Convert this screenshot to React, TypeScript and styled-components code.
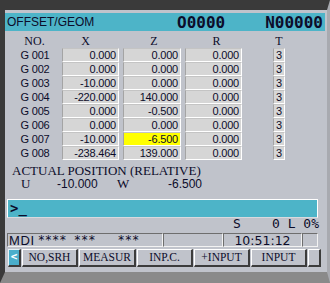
import { Fragment } from "react";
import styled, { createGlobalStyle } from "styled-components";

const GlobalStyle = createGlobalStyle`
  html, body {
    margin: 0;
    padding: 0;
    background: #3a3a3a;
  }
  body {
    width: 330px;
    height: 283px;
    overflow: hidden;
  }
`;

const INK = "#0c0c2a";
const SANS = `"Liberation Sans", Arial, sans-serif`;
const SERIF = `"Liberation Serif", "Times New Roman", serif`;
const MONO = `"DejaVu Sans Mono", monospace`;

const Bezel = styled.div`
  box-sizing: border-box;
  width: 330px;
  height: 283px;
  border-style: solid;
  border-width: 10px 3px 11px 5px;
  border-color: #3a3a3a #a8aab0 #8a8a8a #3a3a3a;
`;

const Screen = styled.div`
  box-sizing: border-box;
  height: 100%;
  padding-top: 3px;
  background: #c0c3cb;
  display: flex;
  flex-direction: column;
  color: ${INK};
`;

const TitleBar = styled.div`
  height: 18px;
  margin-right: 2px;
  padding: 0 2px;
  background: #4db4c8;
  display: flex;
  align-items: center;
`;

const Title = styled.span`
  flex: 1;
  font: 12px ${SANS};
`;

const ProgNo = styled.span<{ $gap?: number }>`
  font: bold 16px ${MONO};
  margin-right: ${(p) => p.$gap ?? 0}px;
`;

const Table = styled.div`
  display: grid;
  grid-template-columns: 51px 57px 58px 57px 1fr;
  grid-template-rows: 17px;
  grid-auto-rows: 14px;
  column-gap: 4px;
  padding-left: 2px;
`;

const HeadCell = styled.div<{ $dx?: number }>`
  font: 12px ${SERIF};
  line-height: 20px;
  text-align: center;
  padding: 0 ${(p) => ((p.$dx ?? 0) < 0 ? -2 * (p.$dx ?? 0) : 0)}px 0
    ${(p) => ((p.$dx ?? 0) > 0 ? 2 * (p.$dx ?? 0) : 0)}px;
`;

const TCol = styled.div`
  width: 12px;
  margin-left: 27px;
`;

const Label = styled.div`
  font: 11px ${SANS};
  line-height: 14px;
  text-align: center;
  padding-left: 5px;
  letter-spacing: -0.2px;
`;

const Field = styled.div<{ $hl?: boolean; $left?: boolean }>`
  box-sizing: border-box;
  height: 14px;
  border-style: solid;
  border-width: 1px;
  border-color: #c4c4c4 #ffffff #ffffff #a4a4a4;
  background: ${(p) => (p.$hl ? "#ffff00" : "#d6d6d6")};
  font: 11px ${SANS};
  line-height: 12px;
  text-align: ${(p) => (p.$left ? "left" : "right")};
  padding: 0 2px 0 2px;
  letter-spacing: -0.2px;
`;

const Actual = styled.div`
  margin-top: 4px;
  padding-left: 7px;
  font: 13px ${SERIF};
  line-height: 13px;
`;

const PosLine = styled.div`
  display: grid;
  grid-template-columns: 36px 60px 51px 1fr;
  padding-left: 9px;
`;

const PosValue = styled.span`
  font: 12px ${SANS};
`;

const CmdBar = styled.div`
  box-sizing: border-box;
  height: 19px;
  margin: 8px 9px 0 2px;
  border-style: solid;
  border-width: 1px;
  border-color: #ffffff #ffffff #d8dade #ffffff;
  background: #4db4c8;
  padding-left: 2px;
  font: bold 14px ${MONO};
  line-height: 17px;
  white-space: pre;
`;

const Status = styled.div`
  height: 11px;
  padding-right: 8px;
  text-align: right;
  font: 13px ${MONO};
  line-height: 11px;
  white-space: pre;
`;

const InfoRow = styled.div`
  display: grid;
  grid-template-columns: 156px 60px 79px 16px;
  height: 14px;
  margin: 4px 0 0 2px;
`;

const InfoBox = styled.div`
  box-sizing: border-box;
  border-style: solid;
  border-width: 1px;
  border-color: #6e6e6e #f2f2f2 #f2f2f2 #6e6e6e;
  display: flex;
  align-items: center;
  justify-content: center;
  overflow: hidden;
`;

const ModeBox = styled(InfoBox)`
  justify-content: flex-start;
  padding-left: 1px;
`;

const Mode = styled.span`
  font: 13px ${SANS};
  letter-spacing: 0.6px;
`;

const Stars = styled.span<{ $gap?: number }>`
  font: 12px ${MONO};
  line-height: 12px;
  align-self: flex-start;
  margin-left: ${(p) => p.$gap ?? 0}px;
  white-space: pre;
`;

const Clock = styled.span`
  font: 12.5px "DejaVu Sans", sans-serif;
`;

const SoftKeys = styled.div`
  display: flex;
  gap: 1px;
  height: 18px;
  margin: 2px 0 0 3px;
`;

const Key = styled.div<{ $w: number }>`
  box-sizing: border-box;
  width: ${(p) => p.$w}px;
  border-style: solid;
  border-width: 1px 2px 2px 1px;
  border-color: #ffffff #3c3c3c #3c3c3c #ffffff;
  background: #c0c3cb;
  font: 11.5px ${SERIF};
  line-height: 15px;
  text-align: center;
  white-space: nowrap;
`;

const BackKey = styled(Key)`
  background: #4aaecb;
  color: #ffffff;
  font: bold 11px ${MONO};
  border-color: #e8f4f8 #3c3c3c #3c3c3c #e8f4f8;
`;

type Row = { no: string; x: string; z: string; r: string; t: string; hl?: boolean };

const rows: Row[] = [
  { no: "G 001", x: "0.000", z: "0.000", r: "0.000", t: "3" },
  { no: "G 002", x: "0.000", z: "0.000", r: "0.000", t: "3" },
  { no: "G 003", x: "-10.000", z: "0.000", r: "0.000", t: "3" },
  { no: "G 004", x: "-220.000", z: "140.000", r: "0.000", t: "3" },
  { no: "G 005", x: "0.000", z: "-0.500", r: "0.000", t: "3" },
  { no: "G 006", x: "0.000", z: "0.000", r: "0.000", t: "3" },
  { no: "G 007", x: "-10.000", z: "-6.500", r: "0.000", t: "3", hl: true },
  { no: "G 008", x: "-238.464", z: "139.000", r: "0.000", t: "3" },
];

const keys = ["NO,SRH", "MEASUR", "INP.C.", "+INPUT", "INPUT"];
const keyWidths = [56, 57, 56, 56, 56];

export default function App() {
  return (
    <>
      <GlobalStyle />
      <Bezel>
        <Screen>
          <TitleBar>
            <Title>OFFSET/GEOM</Title>
            <ProgNo $gap={40}>O0000</ProgNo>
            <ProgNo>N00000</ProgNo>
          </TitleBar>

          <Table>
            <HeadCell $dx={2}>NO.</HeadCell>
            <HeadCell $dx={-5}>X</HeadCell>
            <HeadCell $dx={2}>Z</HeadCell>
            <HeadCell $dx={3}>R</HeadCell>
            <TCol>
              <HeadCell>T</HeadCell>
            </TCol>
            {rows.map((r) => (
              <Fragment key={r.no}>
                <Label>{r.no}</Label>
                <Field>{r.x}</Field>
                <Field $hl={r.hl}>{r.z}</Field>
                <Field>{r.r}</Field>
                <TCol>
                  <Field $left>{r.t}</Field>
                </TCol>
              </Fragment>
            ))}
          </Table>

          <Actual>
            <div>ACTUAL POSITION (RELATIVE)</div>
            <PosLine>
              <span>U</span>
              <PosValue>-10.000</PosValue>
              <span>W</span>
              <PosValue>-6.500</PosValue>
            </PosLine>
          </Actual>

          <CmdBar>{">_"}</CmdBar>
          <Status>{"S    0 L 0%"}</Status>

          <InfoRow>
            <ModeBox>
              <Mode>MDI</Mode>
              <Stars $gap={3}>{"**** ***"}</Stars>
              <Stars $gap={22}>{"***"}</Stars>
            </ModeBox>
            <InfoBox />
            <InfoBox>
              <Clock>10:51:12</Clock>
            </InfoBox>
            <InfoBox />
          </InfoRow>

          <SoftKeys>
            <BackKey $w={13}>{"<"}</BackKey>
            {keys.map((k, i) => (
              <Key key={k} $w={keyWidths[i]}>
                {k}
              </Key>
            ))}
            <Key $w={13} />
          </SoftKeys>
        </Screen>
      </Bezel>
    </>
  );
}
